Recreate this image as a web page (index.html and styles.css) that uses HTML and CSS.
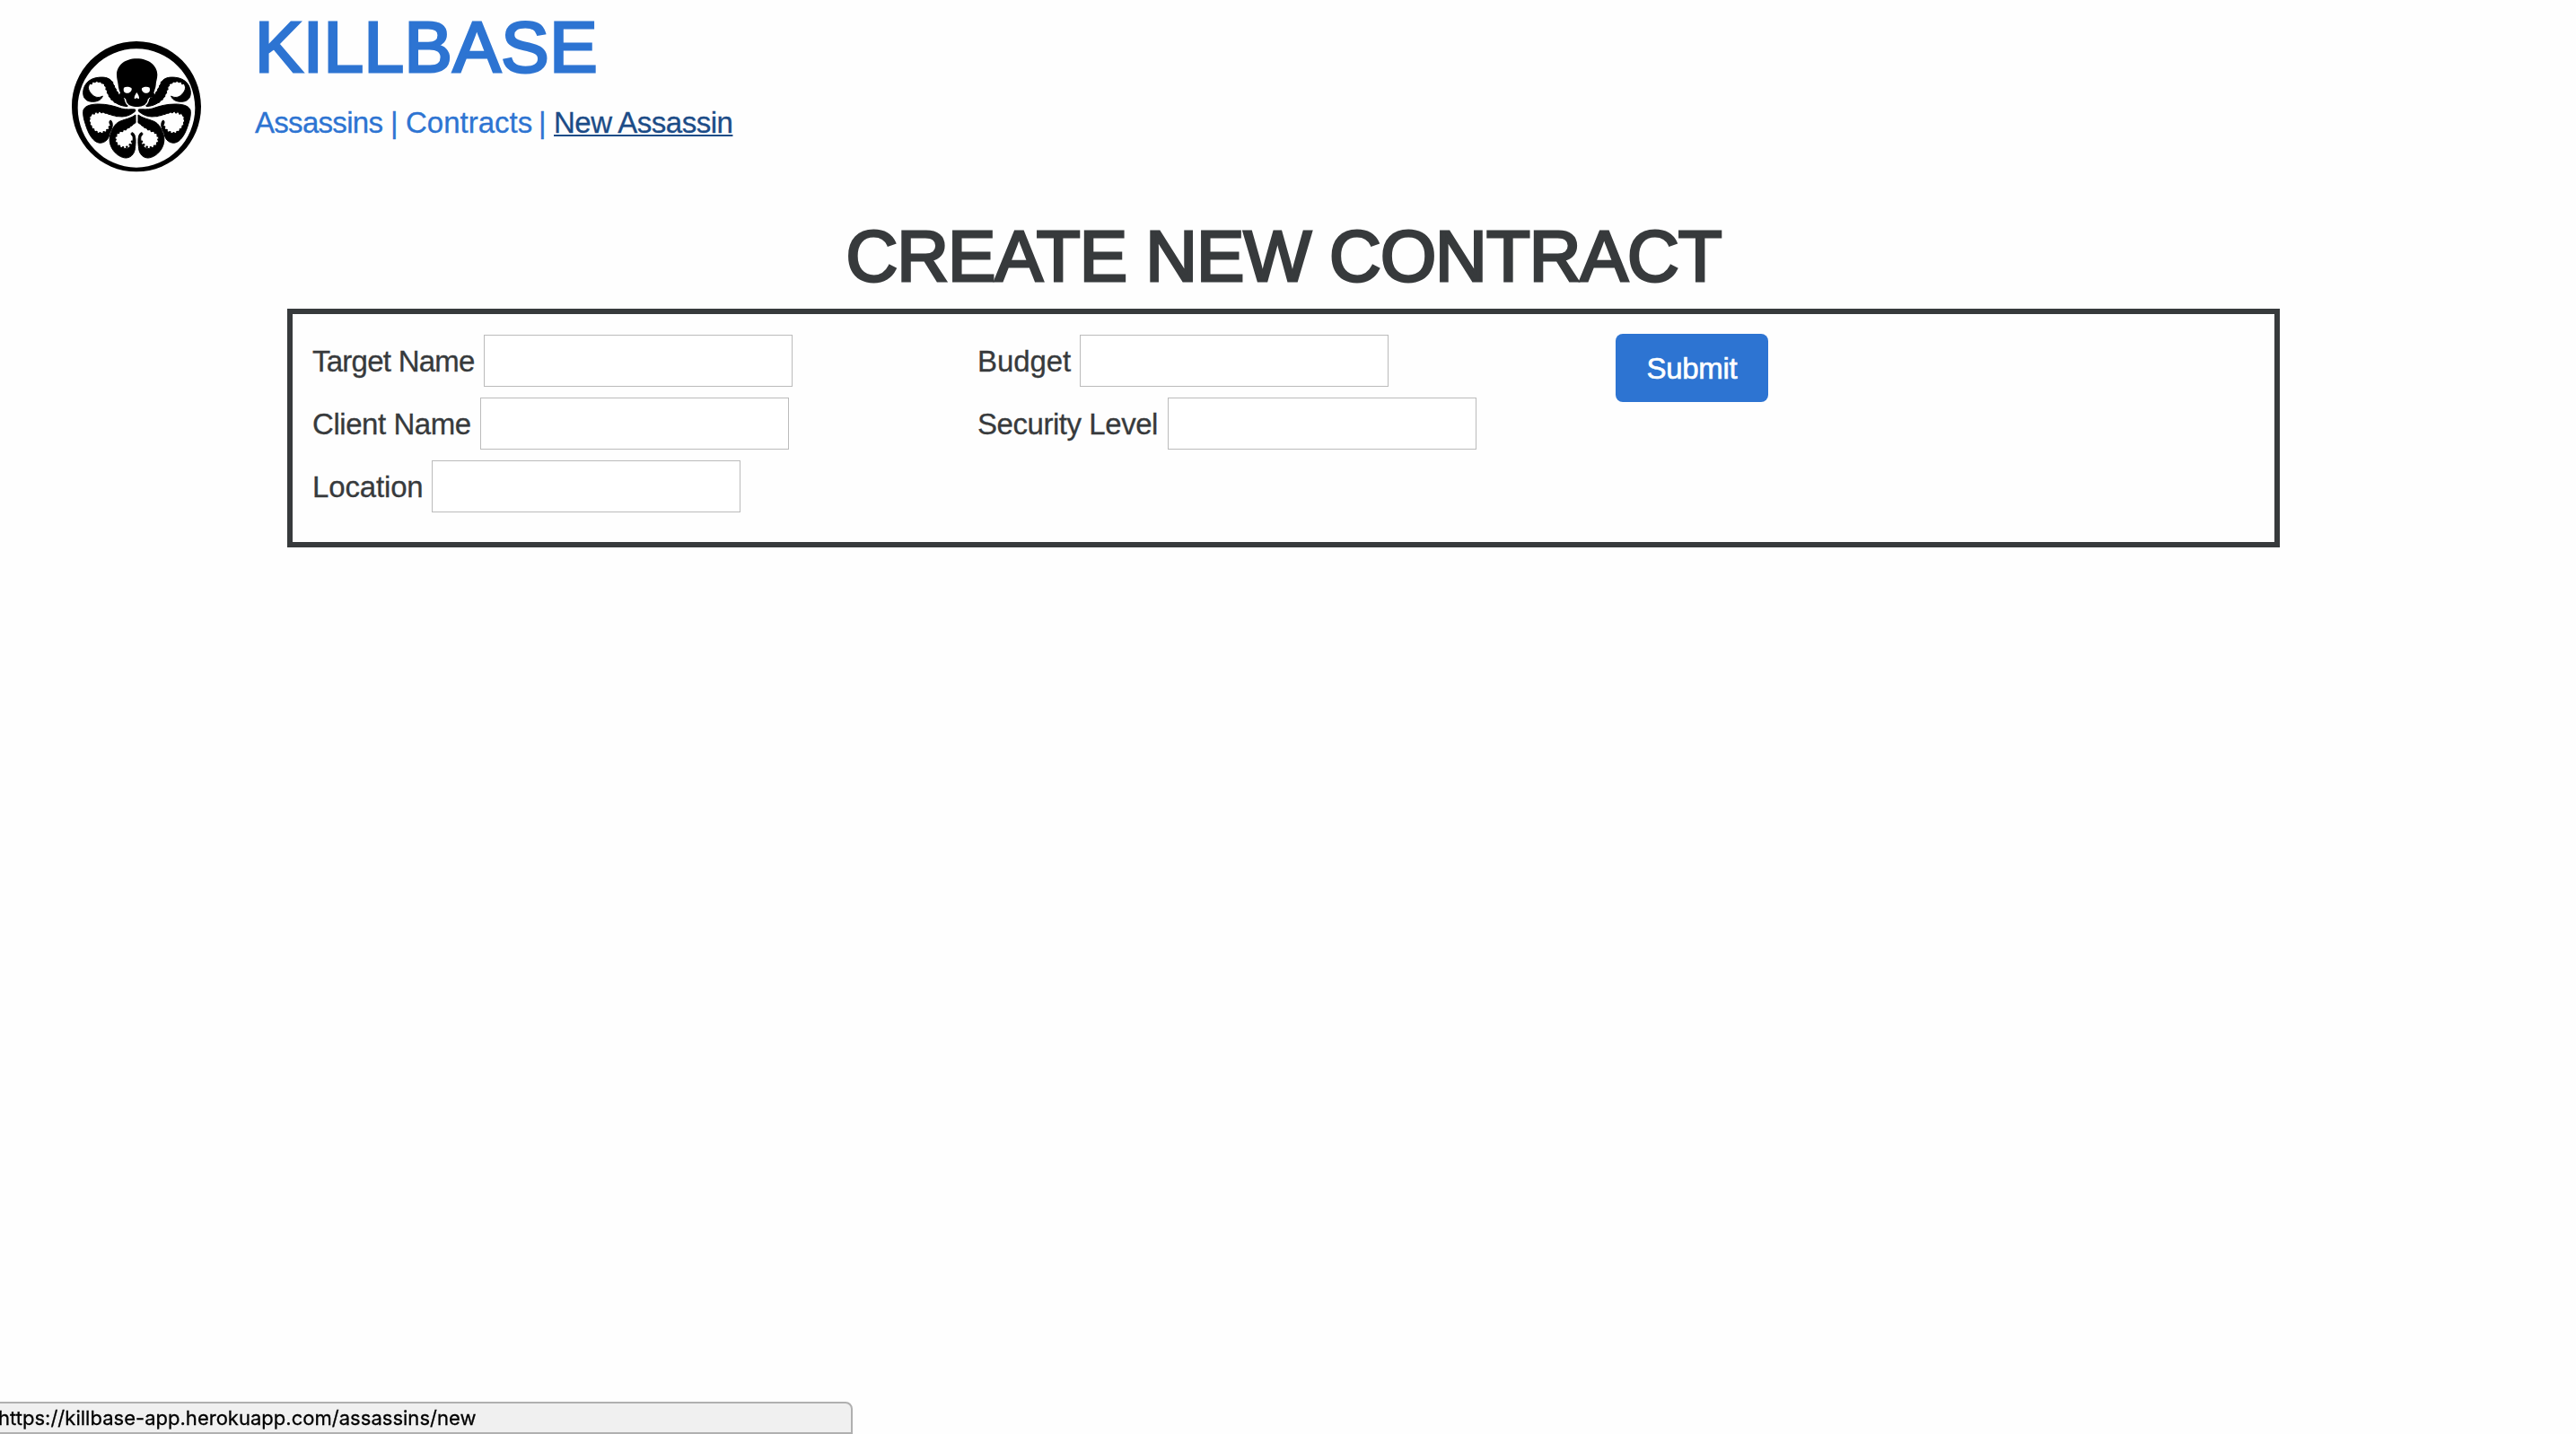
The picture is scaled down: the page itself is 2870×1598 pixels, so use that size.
FILE: index.html
```html
<!DOCTYPE html>
<html lang="en">
<head>
<meta charset="utf-8">
<title>Killbase</title>
<link rel="stylesheet" href="styles.css">
</head>
<body>
<header class="header">
  <svg class="logo" viewBox="0 0 540 540" aria-hidden="true">
    <defs>
      <g id="arms">
        <path class="arm" d="M246 246C215 236 208 210 194 182C183 168 165 167 148 169C116 172 98 195 98 220C98 240 110 250 130 250C148 250 160 242 163 231C152 238 140 236 132 230C115 216 110 200 122 189C138 178 160 180 172 196C180 218 182 238 204 252C218 262 232 265 246 266Z"/>
        <path class="arm" d="M272 276C258 274 244 278 226 273C200 264 178 258 148 258C120 258 98 266 98 284C98 298 100 308 106 326C114 354 130 386 154 388C174 387 184 374 187 354C197 338 199 320 190 312C184 314 185 322 189 328C184 348 168 358 150 356C128 348 115 322 119 304C124 286 146 280 168 286C190 294 206 300 228 300C248 299 260 292 272 282Z"/>
        <path class="arm" d="M273 294C258 306 238 308 220 316C204 324 197 338 191 354C184 370 184 392 198 412C210 428 226 438 242 438C262 436 271 420 272 400C275 376 272 355 262 353C256 355 257 360 264 366C267 382 260 402 244 407C222 408 205 392 204 374C206 356 220 350 238 343C254 336 262 328 273 320Z"/>
        <g class="suckers">
          <path d="M204 250C184 236 180 220 172 196C158 178 138 178 124 190"/>
          <path d="M210 297C182 290 154 274 122 296C110 320 128 346 150 355C168 355 184 346 189 326"/>
          <path d="M270 318C254 332 246 342 222 350C202 360 200 386 218 398C240 410 258 400 265 372"/>
          <path d="M195 186C204 208 214 232 236 243"/>
        </g>
      </g>
    </defs>
    <path fill-rule="evenodd" d="M276 48C396 48 492 146 492 266S396 484 276 484S60 386 60 266S156 48 276 48ZM276 73C168 73 80 162 80 271S168 470 276 470S472 380 472 271S384 73 276 73Z"/>
    <use href="#arms"/>
    <use href="#arms" transform="translate(555 0) scale(-1 1)"/>
    <path d="M277 106C318 106 346 130 346 160C346 174 341 183 341 194C340 204 336 212 334 220C340 229 332 237 318 237C316 247 313 255 310 261C300 270 254 270 246 261C243 255 241 247 237 238C221 238 215 230 222 220C218 212 216 204 215 194C214 183 210 174 210 160C210 130 236 106 277 106Z"/>
    <path fill="#fff" d="M234 203C240 199 251 199 259 204C263 209 257 220 248 221C239 222 230 218 234 203ZM320 203C314 199 303 199 295 204C291 209 297 220 306 221C315 222 324 218 320 203ZM277 219C282 225 286 234 285 239C281 242 278 237 277 237C276 237 273 242 269 239C268 234 272 225 277 219Z"/>
    <path class="jaw" d="M238 240Q240 268 277 270Q314 268 317 240"/>
  </svg>
  <div class="brand">
    <h1 class="title brand-name">KILLBASE</h1>
    <nav class="nav">
      <a class="link assassins">Assassins</a><span class="bar">|</span><a class="link contracts">Contracts</a><span class="bar">|</span><a class="link active">New Assassin</a>
    </nav>
  </div>
</header>
<main class="main">
  <h1 class="title heading">CREATE NEW CONTRACT</h1>
  <form class="form">
    <div class="column">
      <label class="row"><span class="target">Target Name</span><input class="field" type="text"></label>
      <label class="row"><span class="client">Client Name</span><input class="field" type="text"></label>
      <label class="row"><span class="location">Location</span><input class="field" type="text"></label>
    </div>
    <div class="column">
      <label class="row"><span class="budget">Budget</span><input class="field" type="text"></label>
      <label class="row"><span class="security">Security Level</span><input class="field" type="text"></label>
    </div>
    <button class="submit" type="button">Submit</button>
  </form>
</main>
<div class="status">https://killbase-app.herokuapp.com/assassins/new</div>
</body>
</html>
```
FILE: styles.css
```css
* { box-sizing: border-box; }
body {
  margin: 0;
  height: 1598px;
  overflow: hidden;
  background: #fefefe;
  color: #373a3c;
  font: 33px/48px "Liberation Sans", Arial, sans-serif;
  letter-spacing: -0.5px;
  -webkit-text-stroke: 0.3px currentColor;
}
.header {
  display: flex;
  gap: 44px;
  height: 241px;
  padding: 9px 0 0 60px;
  color: #2d74d2;
}
.logo {
  width: 180px;
  height: 180px;
  margin-top: 21px;
  fill: #000;
}
.arm { stroke: #000; stroke-width: 3; }
.suckers {
  fill: none;
  stroke: #000;
  stroke-width: 8;
  stroke-linecap: round;
  stroke-dasharray: 0 13;
}
.jaw { fill: none; stroke: #fff; stroke-width: 4; }
.title {
  margin: 0;
  font-size: 80px;
  line-height: 88px;
  font-weight: 400;
  white-space: nowrap;
  -webkit-text-stroke: 3px currentColor;
}
.brand-name { letter-spacing: 0.5px; }
.nav { display: flex; margin-top: 16px; white-space: nowrap; }
.assassins { width: 151px; letter-spacing: -0.7px; }
.contracts { width: 148px; letter-spacing: 0; }
.bar { width: 17px; }
.active {
  color: #1c4c87;
  text-decoration: underline;
  text-decoration-thickness: 2px;
  text-underline-offset: 2px;
  text-decoration-skip-ink: none;
}
.main { width: 2220px; margin-left: 320px; }
.heading { padding-top: 1px; text-align: center; letter-spacing: -1px; }
.form {
  display: grid;
  grid-template-columns: 741px 711px 170px;
  align-items: start;
  height: 266px;
  margin-top: 14px;
  padding: 22px;
  border: 6px solid #373a3c;
}
.column { display: grid; gap: 12px; padding-top: 1px; }
.row { display: flex; align-items: center; height: 58px; white-space: nowrap; }
.row span { padding-top: 2px; }
.target { width: 191px; letter-spacing: -0.75px; }
.client { width: 187px; letter-spacing: -0.45px; }
.location { width: 133px; letter-spacing: -0.15px; }
.budget { width: 114px; letter-spacing: -0.1px; }
.security { width: 212px; letter-spacing: -0.45px; }
.field {
  width: 344px;
  height: 58px;
  padding: 0 8px;
  border: 1px solid #bbb;
  background: #fff;
  font: inherit;
}
.submit {
  width: 170px;
  height: 76px;
  padding: 2px 0 0;
  border: 0;
  border-radius: 8px;
  background: #2d74d2;
  color: #fff;
  font: inherit;
  letter-spacing: -0.3px;
  -webkit-text-stroke: 0.6px currentColor;
}
.status {
  position: fixed;
  left: -2px;
  bottom: 0;
  width: 952px;
  height: 36px;
  border: 2px solid #b0b0b0;
  border-top-right-radius: 8px;
  background: #f0f0f0;
  color: #000;
  font: 22px/32px Inter, sans-serif;
  letter-spacing: 0.02px;
  text-indent: -2px;
  white-space: nowrap;
}
```
